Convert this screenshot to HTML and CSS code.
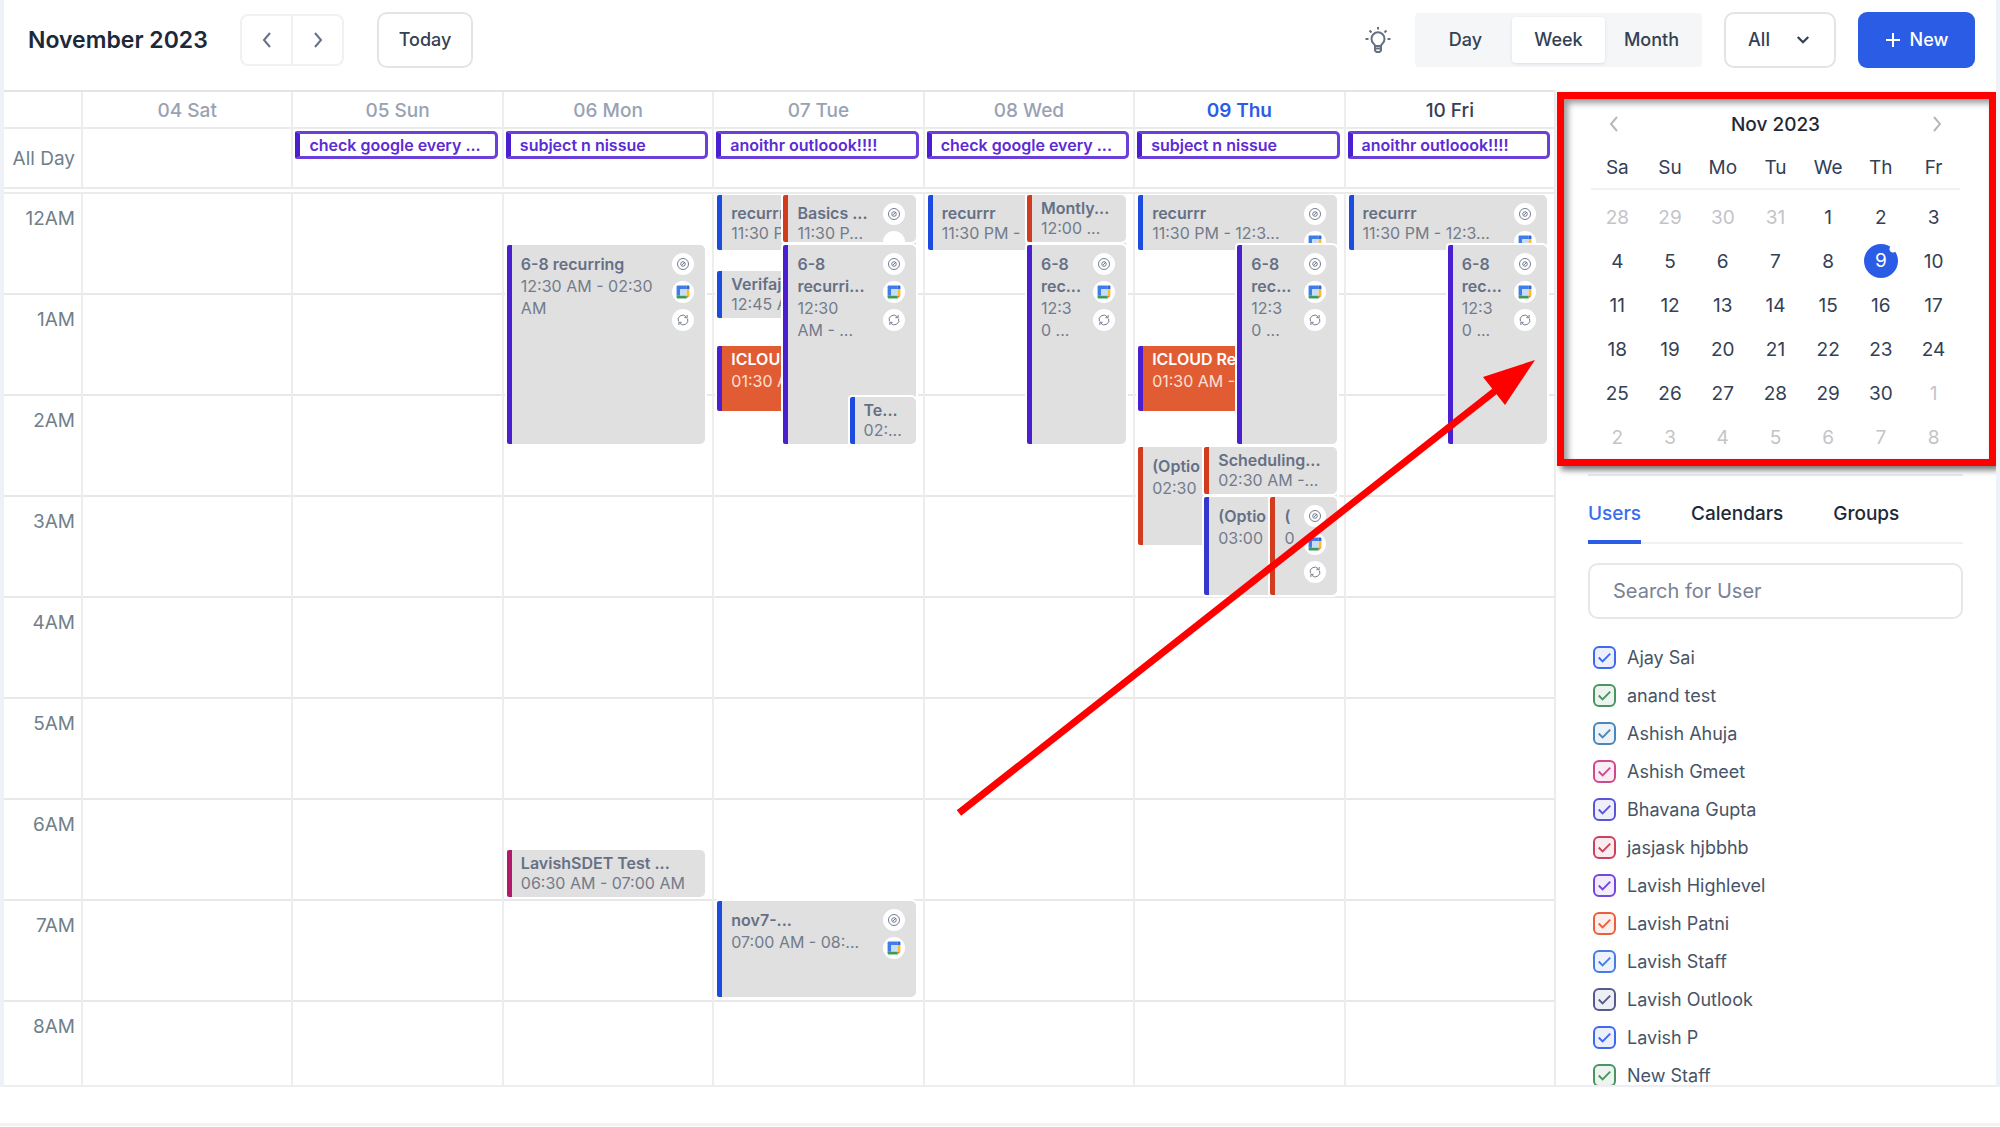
FILE: index.html
```html
<!DOCTYPE html>
<html lang="en">
<head>
<meta charset="utf-8">
<title>Calendar</title>
<link rel="stylesheet" href="styles.css">
</head>
<body>
<svg class="sprite" aria-hidden="true">
  <symbol id="left" viewBox="0 0 24 24"><path d="M15 5l-6 7 6 7"/></symbol>
  <symbol id="right" viewBox="0 0 24 24"><path d="M9 5l6 7-6 7"/></symbol>
  <symbol id="down" viewBox="0 0 24 24"><path d="M5 8l7 7 7-7"/></symbol>
  <symbol id="tick" viewBox="0 0 24 24"><path d="M6 12l4 4 8-8"/></symbol>
  <symbol id="status" viewBox="0 0 24 24"><circle cx="12" cy="12" r="6"/><circle cx="12" cy="12" r="2.5"/><path d="M11 13l3-3"/></symbol>
  <symbol id="gcal" viewBox="0 0 24 24"><path fill="#3f7ee8" d="M6 5h10v4H9v7H5V6a1 1 0 0 1 1-1z"/><path fill="#c9dcfb" d="M9 9h7v7H9z"/><path fill="#2c66d3" d="M16 5h2a1 1 0 0 1 1 1v3h-3z"/><path fill="#fbbc32" d="M16 9h3v7h-3z"/><path fill="#3a9b54" d="M5 16h11v3H6a1 1 0 0 1-1-1z"/><path fill="#ea7a35" d="M16 16h3l-3 3z"/></symbol>
  <symbol id="sync" viewBox="0 0 24 24"><path d="M7 13.500A5 5 0 0 1 15.500 8.500M17 10.500A5 5 0 0 1 8.500 15.500M16.500 6.500v3h-3M7.500 17.500v-3h3"/></symbol>
</svg>
<div class="app">
  <header class="toolbar">
    <h1>November 2023</h1>
    <div class="pager">
      <button type="button" aria-label="Previous week"><svg><use href="#left"/></svg></button>
      <button type="button" aria-label="Next week"><svg><use href="#right"/></svg></button>
    </div>
    <button type="button" class="outlined today">Today</button>
    <span class="spacer"></span>
    <svg class="bulb" viewBox="0 0 26 28"><path d="M10 20.500q0-2-1.500-3a6.500 6.500 0 1 1 9 0q-1.500 1-1.500 3M10 20h6v4.500l-1.500 1.500h-3l-1.500-1.500zM10 22.500h6M13 1v2.500M4.500 4.500l2 2M21.500 4.500l-2 2M0.500 13h3M22.500 13h3"/></svg>
    <div class="views">
      <button type="button">Day</button>
      <button type="button" class="on">Week</button>
      <button type="button">Month</button>
    </div>
    <button type="button" class="outlined filter">All<svg><use href="#down"/></svg></button>
    <button type="button" class="new"><svg viewBox="0 0 16 16"><path d="M8 1v14M1 8h14"/></svg>New</button>
  </header>

  <div class="content">
    <main class="week">
      <div class="row days">
        <span></span><span>04 Sat</span><span>05 Sun</span><span>06 Mon</span><span>07 Tue</span><span>08 Wed</span><span class="current">09 Thu</span><span class="next">10 Fri</span>
      </div>
      <div class="row allday">
        <span class="label">All Day</span>
        <div></div>
        <div><a href="#" class="chip">check google every ...</a></div>
        <div><a href="#" class="chip">subject n nissue</a></div>
        <div><a href="#" class="chip">anoithr outloook!!!!</a></div>
        <div><a href="#" class="chip">check google every ...</a></div>
        <div><a href="#" class="chip">subject n nissue</a></div>
        <div><a href="#" class="chip">anoithr outloook!!!!</a></div>
      </div>
      <div class="row hours">
        <div class="times"><span>12AM</span><span>1AM</span><span>2AM</span><span>3AM</span><span>4AM</span><span>5AM</span><span>6AM</span><span>7AM</span><span>8AM</span></div>
        <div class="day"></div>
        <div class="day"></div>
        <div class="day"><div class="layer">
          <article class="event violet" style="top:51px;height:199px"><p><b>6-8 recurring</b><br>12:30 AM - 02:30<br>AM</p><div class="icons"><svg><use href="#status"/></svg><svg class="g"><use href="#gcal"/></svg><svg><use href="#sync"/></svg></div></article>
          <article class="event magenta small" style="top:656px;height:47px"><p><b>LavishSDET Test ...</b><br>06:30 AM - 07:00 AM</p></article>
        </div></div>
        <div class="day"><div class="layer">
          <article class="event blue medium" style="top:1px;height:55px"><p><b>recurrr</b><br>11:30 PM</p></article>
          <article class="event blue small" style="top:77px;height:47px"><p><b>Verifajy</b><br>12:45 AM</p></article>
          <article class="event orange" style="top:152px;height:65px"><p><b>ICLOUD</b><br>01:30 AM</p></article>
          <article class="event red medium third" style="top:1px;height:47px"><p><b>Basics ...</b><br>11:30 P...</p><div class="icons"><svg><use href="#status"/></svg><svg></svg></div></article>
          <article class="event violet third" style="top:51px;height:199px"><p><b>6-8<br>recurri...</b><br>12:30<br>AM - ...</p><div class="icons"><svg><use href="#status"/></svg><svg class="g"><use href="#gcal"/></svg><svg><use href="#sync"/></svg></div></article>
          <article class="event blue small twothird" style="top:203px;height:47px"><p><b>Te...</b><br>02:...</p></article>
          <article class="event blue" style="top:707px;height:96px"><p><b>nov7-...</b><br>07:00 AM - 08:...</p><div class="icons"><svg><use href="#status"/></svg><svg class="g"><use href="#gcal"/></svg></div></article>
        </div></div>
        <div class="day"><div class="layer">
          <article class="event blue medium" style="top:1px;height:55px"><p><b>recurrr</b><br>11:30 PM -</p></article>
          <article class="event red small half" style="top:1px;height:47px"><p><b>Montly...</b><br>12:00 ...</p></article>
          <article class="event violet half" style="top:51px;height:199px"><p><b>6-8<br>rec...</b><br>12:3<br>0 ...</p><div class="icons"><svg><use href="#status"/></svg><svg class="g"><use href="#gcal"/></svg><svg><use href="#sync"/></svg></div></article>
        </div></div>
        <div class="day"><div class="layer">
          <article class="event blue medium" style="top:1px;height:55px"><p><b>recurrr</b><br>11:30 PM - 12:3...</p><div class="icons"><svg><use href="#status"/></svg><svg class="g"><use href="#gcal"/></svg></div></article>
          <article class="event orange" style="top:152px;height:65px"><p><b>ICLOUD Re</b><br>01:30 AM -</p></article>
          <article class="event violet half" style="top:51px;height:199px"><p><b>6-8<br>rec...</b><br>12:3<br>0 ...</p><div class="icons"><svg><use href="#status"/></svg><svg class="g"><use href="#gcal"/></svg><svg><use href="#sync"/></svg></div></article>
          <article class="event red" style="top:253px;height:98px"><p><b>(Optio</b><br>02:30</p></article>
          <article class="event red small third" style="top:253px;height:47px"><p><b>Scheduling...</b><br>02:30 AM -...</p></article>
          <article class="event indigo third" style="top:303px;height:98px"><p><b>(Optio</b><br>03:00</p></article>
          <article class="event red twothird" style="top:303px;height:98px"><p><b>(</b><br>0</p><div class="icons"><svg><use href="#status"/></svg><svg class="g"><use href="#gcal"/></svg><svg><use href="#sync"/></svg></div></article>
        </div></div>
        <div class="day"><div class="layer">
          <article class="event blue medium" style="top:1px;height:55px"><p><b>recurrr</b><br>11:30 PM - 12:3...</p><div class="icons"><svg><use href="#status"/></svg><svg class="g"><use href="#gcal"/></svg></div></article>
          <article class="event violet half" style="top:51px;height:199px"><p><b>6-8<br>rec...</b><br>12:3<br>0 ...</p><div class="icons"><svg><use href="#status"/></svg><svg class="g"><use href="#gcal"/></svg><svg><use href="#sync"/></svg></div></article>
        </div></div>
      </div>
    </main>

    <aside class="side">
      <section class="mini">
        <div class="mini-head">
          <button type="button" aria-label="Previous month"><svg><use href="#left"/></svg></button>
          <span>Nov 2023</span>
          <button type="button" aria-label="Next month"><svg><use href="#right"/></svg></button>
        </div>
        <table>
          <thead><tr><th>Sa</th><th>Su</th><th>Mo</th><th>Tu</th><th>We</th><th>Th</th><th>Fr</th></tr></thead>
          <tbody>
            <tr><td class="off">28</td><td class="off">29</td><td class="off">30</td><td class="off">31</td><td>1</td><td>2</td><td>3</td></tr>
            <tr><td>4</td><td>5</td><td>6</td><td>7</td><td>8</td><td><span class="selected">9</span></td><td>10</td></tr>
            <tr><td>11</td><td>12</td><td>13</td><td>14</td><td>15</td><td>16</td><td>17</td></tr>
            <tr><td>18</td><td>19</td><td>20</td><td>21</td><td>22</td><td>23</td><td>24</td></tr>
            <tr><td>25</td><td>26</td><td>27</td><td>28</td><td>29</td><td>30</td><td class="off">1</td></tr>
            <tr><td class="off">2</td><td class="off">3</td><td class="off">4</td><td class="off">5</td><td class="off">6</td><td class="off">7</td><td class="off">8</td></tr>
          </tbody>
        </table>
        <div class="highlight"></div>
      </section>
      <nav class="tabs"><a href="#" class="on">Users</a><a href="#">Calendars</a><a href="#">Groups</a></nav>
      <input class="search" type="text" placeholder="Search for User" aria-label="Search for User">
      <ul class="users">
        <li><label class="c-blue"><span class="box"><input type="checkbox" checked><svg><use href="#tick"/></svg></span>Ajay Sai</label></li>
        <li><label class="c-green"><span class="box"><input type="checkbox" checked><svg><use href="#tick"/></svg></span>anand test</label></li>
        <li><label class="c-steel"><span class="box"><input type="checkbox" checked><svg><use href="#tick"/></svg></span>Ashish Ahuja</label></li>
        <li><label class="c-pink"><span class="box"><input type="checkbox" checked><svg><use href="#tick"/></svg></span>Ashish Gmeet</label></li>
        <li><label class="c-indigo"><span class="box"><input type="checkbox" checked><svg><use href="#tick"/></svg></span>Bhavana Gupta</label></li>
        <li><label class="c-rose"><span class="box"><input type="checkbox" checked><svg><use href="#tick"/></svg></span>jasjask hjbbhb</label></li>
        <li><label class="c-violet"><span class="box"><input type="checkbox" checked><svg><use href="#tick"/></svg></span>Lavish Highlevel</label></li>
        <li><label class="c-orange"><span class="box"><input type="checkbox" checked><svg><use href="#tick"/></svg></span>Lavish Patni</label></li>
        <li><label class="c-azure"><span class="box"><input type="checkbox" checked><svg><use href="#tick"/></svg></span>Lavish Staff</label></li>
        <li><label class="c-slate"><span class="box"><input type="checkbox" checked><svg><use href="#tick"/></svg></span>Lavish Outlook</label></li>
        <li><label class="c-blue"><span class="box"><input type="checkbox" checked><svg><use href="#tick"/></svg></span>Lavish P</label></li>
        <li><label class="c-green"><span class="box"><input type="checkbox" checked><svg><use href="#tick"/></svg></span>New Staff</label></li>
      </ul>
    </aside>
    <svg class="arrow" viewBox="0 0 578 456" aria-hidden="true"><path d="M2 453L538 31" fill="none" stroke="#f00" stroke-width="7"/><path d="M578 0L526 17L548 45z" fill="#f00"/></svg>
  </div>
</div>
<footer class="foot"></footer>
</body>
</html>
```

FILE: styles.css
```css
* { box-sizing: border-box; }

body {
  margin: 0;
  background: #fff;
  color: #344054;
  font-family: Inter, "Liberation Sans", sans-serif;
  font-size: 18px;
}

h1, p, ul { margin: 0; padding: 0; }
button { font: inherit; color: inherit; background: none; border: 0; padding: 0; }
a { color: inherit; text-decoration: none; }
svg { fill: none; stroke: currentColor; stroke-width: 2; width: 24px; height: 24px; }
.sprite { position: absolute; width: 0; height: 0; }

.app {
  border: solid #eef2f7;
  border-width: 0 4px;
}

/* Toolbar */
.toolbar {
  display: flex;
  align-items: center;
  height: 90px;
  padding: 0 21px 11px 24px;
}
h1 { font-size: 23px; font-weight: 600; color: #1d2939; width: 212px; white-space: nowrap; }
.pager {
  display: flex;
  height: 52px;
  width: 104px;
  border: 2px solid #f0f1f3;
  border-radius: 8px;
  margin-right: 33px;
  color: #667085;
}
.pager button { flex: 1; display: grid; place-items: center; }
.pager button + button { border-left: 2px solid #f0f1f3; }
.pager svg { width: 24px; height: 24px; stroke-width: 2; }
.outlined {
  height: 56px;
  border: 2px solid #e2e4e9;
  border-radius: 10px;
  font-weight: 500;
}
.today { width: 96px; }
.spacer { flex: 1; }
.bulb { width: 26px; height: 28px; color: #667085; margin-right: 24px; }
.views {
  display: flex;
  height: 54px;
  width: 287px;
  padding: 4px;
  margin-right: 22px;
  background: #f5f6f8;
  border-radius: 4px;
  font-weight: 500;
}
.views button { flex: 1; border-radius: 4px; }
.views .on { background: #fff; box-shadow: 0 1px 3px #d9dce3; }
.filter { display: flex; align-items: center; justify-content: center; gap: 24px; width: 112px; margin-right: 22px; }
.filter svg { width: 18px; height: 18px; stroke-width: 3; }
.new {
  display: flex;
  align-items: center;
  justify-content: center;
  gap: 9px;
  width: 117px;
  height: 56px;
  border-radius: 9px;
  background: #2b5ce6;
  color: #fff;
  font-weight: 500;
}
.new svg { width: 16px; height: 16px; }

/* Week grid */
.content { display: flex; position: relative; border-bottom: 2px solid #eceef1; }
.week { flex: 1; min-width: 0; border-right: 2px solid #ececec; }
.row {
  display: grid;
  grid-template-columns: 77px repeat(7, minmax(0, 1fr));
}
.row > * + * { border-left: 2px solid #ededed; }
.days {
  height: 39px;
  border-top: 2px solid #e4e4e4;
  border-bottom: 2px solid #ebebeb;
  font-size: 19px;
  line-height: 37px;
  text-align: center;
  font-weight: 500;
  color: #98a2b3;
}
.days .current { color: #2b5ce6; font-weight: 600; }
.days .next { color: #344054; }
.allday { height: 60px; border-bottom: 2px solid #ebebeb; }
.label { align-self: center; text-align: right; padding-right: 6px; font-size: 19px; color: #70808a; }
.chip {
  display: block;
  height: 28px;
  margin: 2px 4px 0 2px;
  padding-left: 9px;
  border: 3px solid #6b3fd9;
  border-left: 5px solid #4a1fd0;
  border-radius: 2px 5px 5px 2px;
  color: #5b2bd6;
  font-size: 16px;
  font-weight: 600;
  line-height: 22px;
  white-space: nowrap;
  overflow: hidden;
}
.hours {
  margin-top: 3px;
  border-top: 2px solid #ebebeb;
  height: 893px;
  overflow: hidden;
}
.times span {
  display: block;
  height: 101px;
  padding: 14px 6px 0 0;
  text-align: right;
  font-size: 19px;
  line-height: 22px;
  color: #70808a;
}
.times span, .day {
  background: repeating-linear-gradient(#fff 0 99px, #e8e8e8 99px 101px);
}
.layer { position: relative; margin: 0 7px 0 3px; }
.event {
  position: absolute;
  left: 0;
  right: 0;
  display: flex;
  justify-content: space-between;
  padding: 8px 11px 0 9px;
  border-left: 5px solid;
  border-radius: 2px 5px 5px 2px;
  background: #e0e0e0;
  box-shadow: 0 0 0 2px #fff;
  font-size: 16px;
  line-height: 22px;
  white-space: nowrap;
  overflow: hidden;
}
.event p { color: #737b8b; }
.event b { color: #667085; font-weight: 600; }
.medium { line-height: 20px; }
.small { padding-top: 3px; line-height: 20px; }
.third { left: 33.333%; }
.half { left: 50%; }
.twothird { left: 66.666%; }
.violet { border-color: #4a1fd0; }
.blue { border-color: #1c4be0; }
.red { border-color: #d23c1e; }
.indigo { border-color: #3538cd; }
.magenta { border-color: #b3196b; }
.orange { border-color: #4a1fd0; background: #e25c33; padding-top: 2px; }
.orange p { color: #fbe0d6; }
.orange b { color: #fff; }
.icons { display: flex; flex-direction: column; gap: 6px; width: 22px; flex: none; }
.icons svg { width: 22px; height: 22px; flex: none; border-radius: 50%; background: #fff; color: #667085; stroke-width: 1; }
.icons .g { stroke: none; }

/* Sidebar */
.side { width: 440px; height: 995px; padding: 0 33px 0 32px; overflow: hidden; }
.mini { position: relative; height: 386px; border-bottom: 2px solid #e9ebee; padding: 12px 3px 0; }
.mini-head {
  display: flex;
  justify-content: space-between;
  align-items: center;
  height: 44px;
  padding: 0 11px;
  font-size: 19px;
  font-weight: 500;
  color: #1d2939;
}
.mini-head svg { display: block; width: 24px; height: 24px; color: #b5b8be; }
.mini-head button { width: 24px; }
table { width: 100%; border-collapse: collapse; table-layout: fixed; font-size: 19px; text-align: center; }
th { height: 43px; padding: 0; font-weight: 400; }
thead { border-bottom: 2px solid #f1f2f4; }
td { height: 44px; padding: 0; }
tbody tr:first-child td { height: 50px; padding-top: 6px; }
.off { color: #c2c4c8; }
.selected {
  display: block;
  width: 34px;
  height: 34px;
  margin: 0 auto;
  border-radius: 50%;
  background: radial-gradient(circle at 29px 5px, #fff 3px, #2b5ce6 4px);
  color: #fff;
  line-height: 34px;
}
.highlight {
  position: absolute;
  inset: 2px -33px 8px -31px;
  border: 7px solid #f00;
  box-shadow: 4px 4px 6px #777, inset 4px 4px 6px #999;
}
.tabs {
  display: flex;
  gap: 50px;
  height: 68px;
  border-bottom: 2px solid #f1f2f4;
  font-size: 19px;
  font-weight: 500;
  line-height: 76px;
  color: #1d2939;
}
.tabs .on { height: 68px; color: #3b6cf0; border-bottom: 4px solid #2b5ce6; }
.search {
  display: block;
  width: 100%;
  height: 56px;
  margin: 19px 0;
  padding: 0 23px;
  border: 2px solid #e6e7eb;
  border-radius: 10px;
  font: inherit;
  font-size: 20px;
}
.search::placeholder { color: #798294; opacity: 1; }
.users { list-style: none; padding: 0 5px; color: #475467; }
.users label { display: flex; align-items: center; gap: 11px; height: 38px; }
.box { display: grid; color: var(--tone); }
.box > * { grid-area: 1 / 1; }
.box input {
  appearance: none;
  width: 23px;
  height: 23px;
  margin: 0;
  border: 2px solid var(--tone);
  border-radius: 6px;
  background: color-mix(in srgb, var(--tone) 10%, white);
}
.box svg { width: 23px; height: 23px; pointer-events: none; }
.c-blue { --tone: #4169ee; }
.c-green { --tone: #4b9363; }
.c-steel { --tone: #4c86b8; }
.c-pink { --tone: #cf4a8c; }
.c-indigo { --tone: #5a55d8; }
.c-rose { --tone: #c9435f; }
.c-violet { --tone: #7447e0; }
.c-orange { --tone: #e8603e; }
.c-azure { --tone: #4a7ce0; }
.c-slate { --tone: #565a8c; }

.arrow { position: absolute; left: 953px; top: 270px; width: 578px; height: 456px; stroke: none; pointer-events: none; }
.foot { height: 39px; border-bottom: 3px solid #f1f2f3; }
```
